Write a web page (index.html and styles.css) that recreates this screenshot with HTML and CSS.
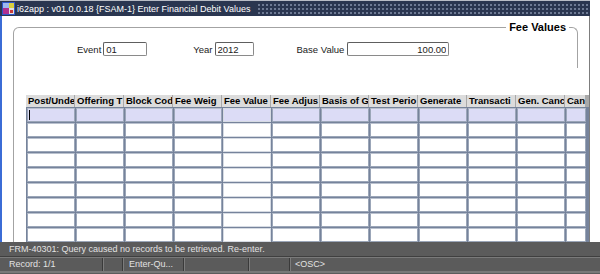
FILE: index.html
```html
<!DOCTYPE html>
<html lang="en">
<head>
    <meta charset="UTF-8">
    <meta name="viewport" content="width=device-width, initial-scale=1.0">
    <title>Enter Financial Debit Values</title>
    <link rel="stylesheet" href="styles.css">
</head>
<body>
    <div class="titlebar">
        <svg class="app-icon" width="13" height="13" viewBox="0 0 13 13" xmlns="http://www.w3.org/2000/svg">
            <rect x="0" y="0" width="13" height="13" fill="#2f56c8"/>
            <rect x="1" y="1" width="6" height="5" fill="#9fb8f0"/>
            <rect x="7" y="1" width="5" height="5" fill="#d8d040"/>
            <rect x="1" y="6" width="6" height="6" fill="#b03090"/>
            <rect x="7" y="6" width="5" height="6" fill="#e0e0e0"/>
            <rect x="8" y="8" width="3" height="3" fill="#c83a3a"/>
        </svg>
        <span class="title">i62app : v01.0.0.18 {FSAM-1} Enter Financial Debit Values</span>
        <span class="grip"></span>
    </div>

    <div class="body">
        <div class="canvas">
            <div class="frame">
                <span class="frame-title">Fee Values</span>
                <div class="fields">
                    <label class="field">Event <input class="input input-event" type="text" value="01"></label>
                    <label class="field field-year">Year <input class="input input-year" type="text" value="2012"></label>
                    <label class="field field-base">Base Value <input class="input input-base" type="text" value="100.00"></label>
                </div>
            </div>

            <div class="grid-area">
                <div class="table">
                    <div class="table-head">
                        <div class="th">Post/Unde</div>
                        <div class="th">Offering T</div>
                        <div class="th">Block Cod</div>
                        <div class="th">Fee Weig</div>
                        <div class="th">Fee Value</div>
                        <div class="th">Fee Adjus</div>
                        <div class="th">Basis of G</div>
                        <div class="th">Test Perio</div>
                        <div class="th">Generate</div>
                        <div class="th">Transacti</div>
                        <div class="th">Gen. Canc</div>
                        <div class="th">Canc</div>
                    </div>
                    <div class="table-body" id="tableBody"></div>
                </div>
            </div>
        </div>
    </div>

    <div class="statusbar">
        <div class="status-message">FRM-40301: Query caused no records to be retrieved. Re-enter.</div>
        <div class="status-row">
            <span class="status-cell cell-record">Record: 1/1</span>
            <span class="status-cell cell-small"></span>
            <span class="status-cell cell-mode">Enter-Qu...</span>
            <span class="status-cell cell-blank"></span>
            <span class="status-cell cell-blank2"></span>
            <span class="status-cell cell-osc">&lt;OSC&gt;</span>
        </div>
    </div>

    <script>
        // Build the empty record rows
        const tableBody = document.getElementById('tableBody');
        const rowCount = 9;
        const colCount = 12;

        for (let r = 0; r < rowCount; r++) {
            for (let c = 0; c < colCount; c++) {
                const cell = document.createElement('div');
                cell.className = 'td';
                if (r === 0) cell.classList.add('current');
                if (c === 4) cell.classList.add('td-value');
                if (r === 0 && c === 0) {
                    const caret = document.createElement('span');
                    caret.className = 'caret';
                    cell.appendChild(caret);
                }
                tableBody.appendChild(cell);
            }
        }
    </script>
</body>
</html>
```

FILE: styles.css
```css
body {
    margin: 0;
    width: 600px;
    height: 274px;
    overflow: hidden;
    background: #fff;
    font-family: "Liberation Sans", Arial, sans-serif;
    display: flex;
    flex-direction: column;
}

/* title bar */
.titlebar {
    width: 590px;
    height: 16px;
    box-sizing: border-box;
    border-top: 1px solid #b9bdc6;
    background: #2a3650;
    display: flex;
    align-items: center;
    color: #fff;
    font-size: 9px;
    flex-shrink: 0;
}
.app-icon {
    margin: 0 2px 0 2px;
    flex-shrink: 0;
}
.title {
    white-space: nowrap;
}
.grip {
    flex: 1;
    height: 11px;
    margin: 0 2px 0 7px;
    background-image: radial-gradient(circle, #6e7b94 0.7px, transparent 1.1px);
    background-size: 4px 4px;
}

/* form body */
.body {
    width: 590px;
    height: 226px;
    box-sizing: border-box;
    border-left: 2px solid #3b6cd6;
    border-right: 1px solid #7d7d7d;
    display: flex;
    overflow: hidden;
    flex-shrink: 0;
}
.canvas {
    flex: 1;
    margin: 11px 0 0 11px;
    display: flex;
    flex-direction: column;
}
.frame {
    position: relative;
    width: 565px;
    height: 50px;
    box-sizing: border-box;
    border: 1px solid #a3a3a3;
    border-bottom: none;
    border-radius: 6px 6px 0 0;
}
.frame-title {
    position: absolute;
    right: 8px;
    top: -8px;
    padding: 0 3px;
    background: #fff;
    font-size: 11px;
    font-weight: bold;
    line-height: 14px;
    color: #000;
}
.fields {
    display: flex;
    align-items: center;
    padding: 14px 0 0 63px;
}
.field {
    display: flex;
    align-items: center;
    gap: 2px;
    font-size: 9.5px;
    color: #222;
}
.field-year {
    margin-left: 46px;
}
.field-base {
    margin-left: 43px;
}
.input-base {
    margin-left: 1px;
}
.input {
    height: 14px;
    box-sizing: border-box;
    border: 1px solid #8a8a8a;
    border-top-color: #5e5e5e;
    border-left-color: #5e5e5e;
    border-radius: 2px;
    padding: 0 2px;
    font-family: "Liberation Sans", Arial, sans-serif;
    font-size: 9.5px;
    color: #222;
    background: #fff;
}
.input-event {
    width: 44px;
}
.input-year {
    width: 39px;
}
.input-base {
    width: 102px;
    text-align: right;
}

/* multi-record block */
.grid-area {
    flex: 1;
    border-left: 1px solid #a3a3a3;
    padding: 27px 0 0 12px;
}
.table {
    width: 563px;
    overflow: hidden;
}
.table-head,
.table-body {
    display: grid;
    grid-template-columns: repeat(11, 48px) 20px;
    column-gap: 1px;
}
.table-head {
    background: #a9a9a9;
    height: 12px;
}
.th {
    background: #dcdcdc;
    font-size: 9.5px;
    font-weight: bold;
    line-height: 12px;
    padding-left: 2px;
    white-space: nowrap;
    overflow: hidden;
    color: #000;
}
.table-body {
    row-gap: 1px;
    background: #76839b;
    padding: 1px 0 0 1px;
}
.td {
    height: 14px;
    box-sizing: border-box;
    border: 1px solid #9ba6b8;
    border-top-color: #b9c1ce;
    background: #fff;
    position: relative;
}
.td.current {
    background: #dcdcf6;
}
.td-value {
    border-color: #d6dbe3;
}
.caret {
    display: block;
    width: 1px;
    height: 10px;
    margin: 1px 0 0 1px;
    background: #000;
}

/* status bar */
.statusbar {
    flex: 1;
    background: #5b5b5b;
    color: #e2e2e2;
    font-size: 9px;
    display: flex;
    flex-direction: column;
}
.status-message {
    height: 14px;
    line-height: 14px;
    padding-left: 9px;
    border-bottom: 1px solid #3f3f3f;
    box-shadow: 0 1px 0 #7a7a7a;
}
.status-row {
    display: flex;
    height: 13px;
    margin-top: 1px;
    line-height: 13px;
    border-bottom: 2px solid #787878;
}
.status-cell {
    border-right: 1px solid #3a3a3a;
    box-shadow: 1px 0 0 #7c7c7c;
    white-space: nowrap;
}
.cell-record {
    width: 93px;
    padding-left: 9px;
}
.cell-small {
    width: 19px;
}
.cell-mode {
    width: 54px;
    padding-left: 6px;
}
.cell-blank {
    width: 64px;
}
.cell-blank2 {
    width: 40px;
}
.cell-osc {
    flex: 1;
    padding-left: 5px;
    border-right: none;
    box-shadow: none;
}
```
